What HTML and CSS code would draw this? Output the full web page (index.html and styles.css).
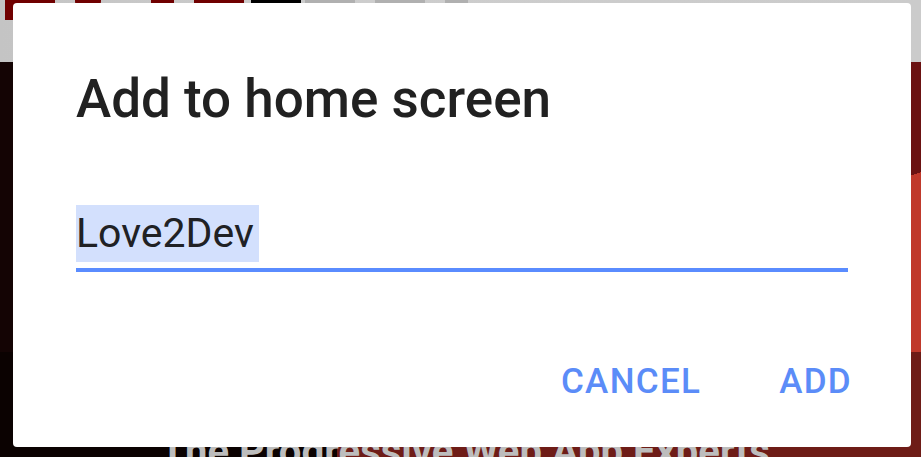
FILE: index.html
```html
<!DOCTYPE html>
<html lang="en">
<head>
    <meta charset="UTF-8">
    <meta name="viewport" content="width=device-width, initial-scale=1.0">
    <title>Add to home screen</title>
    <link rel="stylesheet" href="styles.css">
</head>
<body>
    <div class="page">
        <header class="site-header">
            <span class="logo-block red"></span>
            <span class="logo-dot red"></span>
            <span class="logo-block red narrow"></span>
            <span class="logo-block red"></span>
            <span class="logo-block black"></span>
            <span class="logo-block grey"></span>
            <span class="logo-block grey"></span>
            <span class="logo-block grey narrow"></span>
        </header>
        <section class="hero">
            <div class="hero-top">
                <div class="hero-dark"></div>
                <div class="hero-accent"></div>
            </div>
            <div class="hero-bottom">
                <h2 class="tagline">The Progressive Web App Experts</h2>
            </div>
        </section>
    </div>

    <div class="dialog">
        <h1 class="dialog-title">Add to home screen</h1>
        <div class="field">
            <span class="field-text">Love2Dev</span>
        </div>
        <div class="dialog-actions">
            <button class="action">CANCEL</button>
            <button class="action">ADD</button>
        </div>
    </div>
</body>
</html>
```

FILE: styles.css
```css
body {
    margin: 0; padding: 0;
    width: 921px; height: 457px; overflow: hidden;
    font-family: Roboto, 'Noto Sans', sans-serif;
    background-color: #0b0201;
}

.page { display: flex; flex-direction: column; height: 457px; }

.site-header {
    height: 62px; flex: none;
    background: linear-gradient(to right, #c4c4c4, #cdcdcd 40%, #cbcbcb);
    display: flex; align-items: flex-start; gap: 0;
    padding-left: 5px;
}
.logo-block { display: block; width: 50px; height: 20px; margin-right: 20px; }
.logo-block.narrow { width: 23px; }
.logo-dot { display: block; width: 26px; height: 14px; margin-right: 50px; border-radius: 0 0 13px 13px; }
.red { background-color: #700000; }
.black { background-color: #000000; width: 50px; margin-left: -13px; margin-right: 4px; }
.grey { background-color: #b0b0b0; }

.hero { flex: 1; display: flex; flex-direction: column; }
.hero-top { height: 290px; display: flex; }
.hero-dark { flex: 1; background-color: #140404; }
.hero-accent {
    width: 10px;
    background: linear-gradient(162deg, #6b1212 0, #6b1212 108px, #c0392b 108px);
}
.hero-bottom {
    flex: 1;
    background: linear-gradient(to right, #0b0201 0, #0b0201 337px, #6e1c17 337px);
    display: flex; justify-content: center;
}
.tagline {
    margin: 80px 0 0; padding-left: 9px;
    font-size: 40px; font-weight: 700; color: #bdbdbd;
    line-height: 1; white-space: nowrap;
}

.dialog {
    position: absolute; top: 3px; left: 13px;
    width: 898px; height: 444px; box-sizing: border-box;
    background-color: #ffffff; border-radius: 4px;
    padding: 70px 63px 0 63px;
    display: flex; flex-direction: column;
}
.dialog-title {
    margin: 0; font-size: 53px; font-weight: 500; color: #212121;
    line-height: 52px; letter-spacing: 0;
}
.field {
    margin-top: 80px;
    border-bottom: 4px solid #5a8cff;
    padding-bottom: 6px;
}
.field-text {
    display: inline-block; font-size: 41px; color: #202124;
    line-height: 57px; background-color: #d3e0fd;
    padding-right: 5px;
}
.dialog-actions {
    margin-top: 90px;
    display: flex; justify-content: flex-end; gap: 78px;
    margin-right: -4px;
}
.action {
    border: none; background: none; padding: 0; margin: 0;
    font-family: Roboto, 'Noto Sans', sans-serif;
    font-size: 35px; font-weight: 500; color: #5b8cf8;
    line-height: 40px; letter-spacing: 1.3px; cursor: pointer;
}
```
